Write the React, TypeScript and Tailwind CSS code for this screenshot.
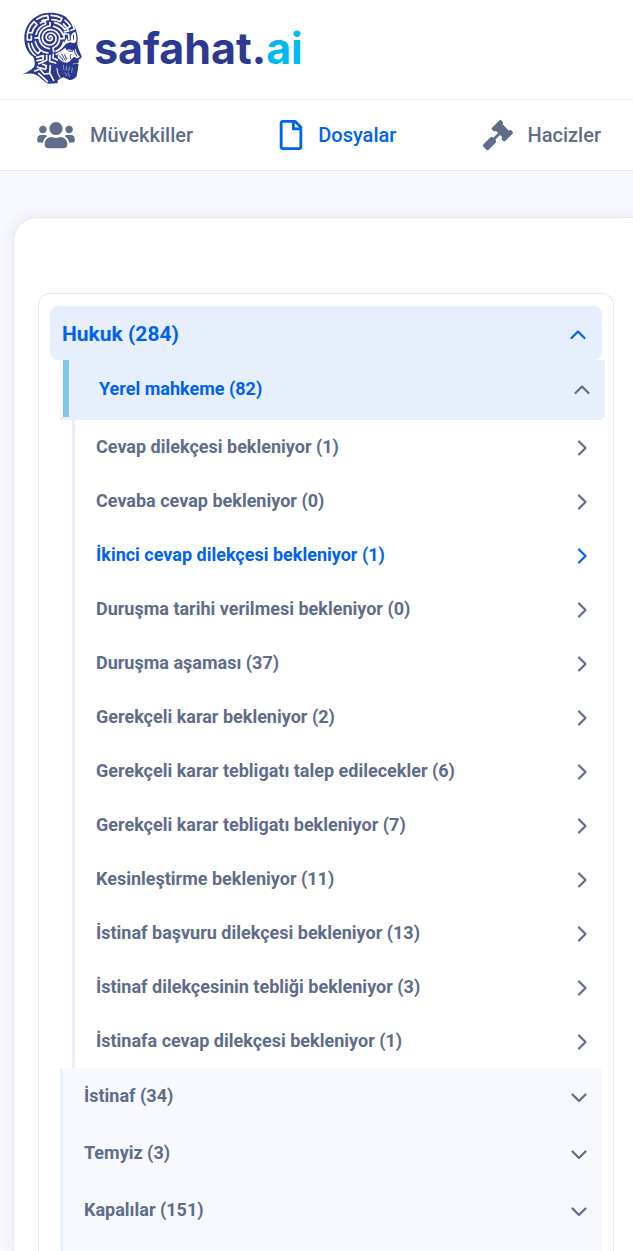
import { useState } from "react";
import { FaGavel, FaRegFile, FaUsers } from "react-icons/fa";

const navItems = [
    { id: "clients", title: "Müvekkiller", icon: FaUsers, iconClass: "w-[38px]" },
    { id: "files", title: "Dosyalar", icon: FaRegFile, iconClass: "w-6" },
    { id: "liens", title: "Hacizler", icon: FaGavel, iconClass: "w-[30px]" },
];

const localCourtSteps = [
    { title: "Cevap dilekçesi bekleniyor", count: 1 },
    { title: "Cevaba cevap bekleniyor", count: 0 },
    { title: "İkinci cevap dilekçesi bekleniyor", count: 1 },
    { title: "Duruşma tarihi verilmesi bekleniyor", count: 0 },
    { title: "Duruşma aşaması", count: 37 },
    { title: "Gerekçeli karar bekleniyor", count: 2 },
    { title: "Gerekçeli karar tebligatı talep edilecekler", count: 6 },
    { title: "Gerekçeli karar tebligatı bekleniyor", count: 7 },
    { title: "Kesinleştirme bekleniyor", count: 11 },
    { title: "İstinaf başvuru dilekçesi bekleniyor", count: 13 },
    { title: "İstinaf dilekçesinin tebliği bekleniyor", count: 3 },
    { title: "İstinafa cevap dilekçesi bekleniyor", count: 1 },
];

const otherStages = [
    { title: "İstinaf", count: 34 },
    { title: "Temyiz", count: 3 },
    { title: "Kapalılar", count: 151 },
];

const chevrons = {
    up: "M1.5 12 8 5.5l6.5 6.5",
    down: "M1.5 6.5 8 13l6.5-6.5",
    right: "M5 2.5 11.5 9 5 15.5",
};

const Chevron = ({ dir }: { dir: keyof typeof chevrons }) => (
    <svg className="w-4 h-4 shrink-0 overflow-visible" viewBox="0 0 16 16" fill="none" stroke="currentColor" strokeWidth="2.2" strokeLinecap="round" strokeLinejoin="round" aria-hidden="true">
        <path d={chevrons[dir]} />
    </svg>
);

const LogoMark = () => (
    <svg className="w-[60px] h-[72px] shrink-0" viewBox="20 21 180 216" fill="none" aria-hidden="true">
        <path
            fill="#2b3990"
            d="M101 23C125 22 147 29 163 44C177 57 185 76 187 98C188 107 184 114 187 122C190 134 195 144 199 154C199 160 194 163 189 164L191 170L187 174L190 179C187 184 189 189 187 196L184 214C178 222 170 226 162 225L144 217L127 226L127 235L100 236C82 228 76 216 62 209C48 204 36 206 21 208C36 201 49 194 56 185C61 177 57 165 54 156C38 146 27 125 27 100C27 56 60 24 101 23Z"
        />
        <g stroke="#fff" strokeWidth="5" strokeLinecap="round" strokeLinejoin="round">
            {/* spiral */}
            <path d="M103 99c-3-3 0-7 5-5c6 4 3 13-5 13c-10 0-14-11-8-18c8-9 24-5 27 8c2 13-7 23-19 23c-13 0-22-10-22-22" />
            {/* inner rings */}
            <path d="M81 98c0-13 11-25 25-24c15 1 27 12 27 27M133 101l13 0l0-14l10 0M133 101c-1 13-8 23-20 28l2 11M71 98c0-19 15-34 33-35l0-10M71 98l-12 1M71 98c1 18 14 31 31 33M115 64c14 4 24 13 28 25" />
            <path d="M60 110c4 18 18 32 38 34M62 88c4-14 14-26 29-31l-2-9l-14 6M118 53c13 3 24 11 30 21l9-5M145 111c-3 13-11 23-23 28" />
            {/* outer rings */}
            <path d="M36 105c-2-22 6-42 20-55l9 9c-8 7-13 15-15 25l-12-2M37 105l11 0l0-12M49 116c3 13 9 23 19 30l8-10M39 116c3 15 10 28 21 35" />
            <path d="M64 43c10-7 20-11 33-12l2 12l-19 4M107 31c12 0 23 3 33 9l-5 10c-8-4-16-6-25-6M149 46c7 5 12 11 16 18l-9 5M144 57c7 6 12 13 16 21l-13 3" />
            <path d="M157 39c10 8 17 19 20 33l-10 4M160 88l1 15" />
            {/* back of the head and neck */}
            <path d="M64 157l20-5l-1 12l-18 3M94 151l0 15l-24 10M104 152l-1 17l18 5M114 148l-1 11l13 6M66 186l25 7l2-11l-11-4M58 198l16-6l12 15l13-1M70 205l26 24M105 182l-2 22l12 22" />
            <path d="M123 148l18-9M134 132l13-13" />
        </g>
        {/* forehead and face */}
        <path
            fill="#fff"
            d="M148 110L154 98L158 108L167 106L166 93L172 84L180 80C182 89 184 98 183 109L177 115L163 112L150 118L143 122ZM138 137L150 128L154 136L162 133L172 137L181 131C182 144 189 150 194 156L185 160L176 155C172 161 166 163 163 169L155 173L144 171L136 166L128 160L127 151Z"
        />
        <g stroke="#2b3990" strokeWidth="3" strokeLinecap="round" strokeLinejoin="round">
            <path d="M174 90l1 13M154 131c8-4 16-3 24 1M160 138l12 1M177 133l2 11l6 10M132 152l12 14M139 148l11 18M148 149l6 14M167 148c-3 4-3 9-1 13" />
        </g>
        {/* beard */}
        <g stroke="#fff" strokeWidth="1.4" strokeLinecap="round">
            <path d="M173 177l9-2l6 1M163 186l-3 11M171 189l-2 13M153 184l1 12M144 181l2 14M158 203l4 10M149 203l5 9" />
        </g>
        <path d="M125 190l2 14l8 15" stroke="#fff" strokeWidth="3" strokeLinecap="round" />
    </svg>
);

const App = () => {
    const [activeNav, setActiveNav] = useState("files");
    const [activeStep, setActiveStep] = useState(2);
    const [groupOpen, setGroupOpen] = useState(true);
    const [courtOpen, setCourtOpen] = useState(true);

    return (
        <div className="min-h-screen flex flex-col overflow-x-hidden bg-[#f8f9ff] font-[Roboto,sans-serif] text-[#5f6c8a]">
            <header className="bg-white">
                <div className="h-[100px] flex items-start border-b border-[#e7e8f1] px-[22px] pt-3">
                    <a href="#" className="flex items-start gap-3">
                        <LogoMark />
                        <span className="font-[Inter,sans-serif] text-[43px] leading-[72px] font-bold text-[#2b3990]">
                            safahat.<span className="text-[#00b9f2]">ai</span>
                        </span>
                    </a>
                </div>

                <nav className="h-[71px] flex items-center justify-between border-b border-[#e7e8f1] pl-[37px] pr-8">
                    {navItems.map(({ id, title, icon: Icon, iconClass }) => (
                        <a
                            key={id}
                            href="#"
                            onClick={() => setActiveNav(id)}
                            className={`flex items-center gap-[15px] text-xl font-medium ${activeNav === id ? "text-[#0062f0]" : ""}`}
                        >
                            <Icon className={`h-[30px] ${iconClass}`} />
                            {title}
                        </a>
                    ))}
                </nav>
            </header>

            <main className="flex-1 flex flex-col mt-[46px] ml-[13px] pt-[75px] pl-6 pr-[19px] bg-white border-t border-l border-[#e7e8f1] rounded-tl-3xl shadow-[0_0_16px_rgba(30,30,80,0.08)]">
                <div className="flex-1 border border-b-0 border-[#e7e8f1] rounded-t-xl px-[11px] pt-3 text-lg leading-6 font-bold">
                    <button
                        onClick={() => setGroupOpen(!groupOpen)}
                        className="w-full h-[54px] flex items-center justify-between rounded-lg bg-[#e7effd] pt-0.5 pl-3 pr-4 text-[21px] text-[#0062f0]"
                    >
                        Hukuk (284)
                        <Chevron dir={groupOpen ? "up" : "down"} />
                    </button>

                    {groupOpen && (
                        <div className="ml-[10px]">
                            <div className="border-b-[3px] border-[#e7effd]">
                                <button
                                    onClick={() => setCourtOpen(!courtOpen)}
                                    className="w-full h-[57px] translate-x-[3px] flex items-center justify-between border-l-6 border-[#7fc7e8] bg-[#e7effd] pl-[30px] pr-[15px] text-[#0062f0]"
                                >
                                    Yerel mahkeme (82)
                                    <span className="text-[#5f6c8a]">
                                        <Chevron dir={courtOpen ? "up" : "down"} />
                                    </span>
                                </button>
                            </div>

                            {courtOpen && (
                                <ul className="ml-3 border-l-[3px] border-[#e7effd]">
                                    {localCourtSteps.map((step, idx) => (
                                        <li key={step.title}>
                                            <button
                                                onClick={() => setActiveStep(idx)}
                                                className={`w-full h-[54px] flex items-center justify-between pl-[21px] pr-3 ${activeStep === idx ? "text-[#0062f0]" : ""}`}
                                            >
                                                {step.title} ({step.count})
                                                <Chevron dir="right" />
                                            </button>
                                        </li>
                                    ))}
                                </ul>
                            )}

                            <ul className="border-l-[3px] border-[#e7effd] bg-[#f8f9ff] pb-3">
                                {otherStages.map((stage) => (
                                    <li key={stage.title}>
                                        <button className="w-full h-[57px] flex items-center justify-between pb-0.5 pl-[21px] pr-[15px]">
                                            {stage.title} ({stage.count})
                                            <Chevron dir="down" />
                                        </button>
                                    </li>
                                ))}
                            </ul>
                        </div>
                    )}
                </div>
            </main>
        </div>
    );
};

export default App;
